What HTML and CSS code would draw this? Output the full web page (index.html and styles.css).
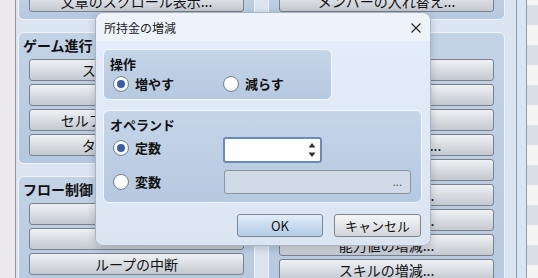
FILE: index.html
```html
<!DOCTYPE html>
<html lang="ja">
<head>
    <meta charset="UTF-8">
    <title>所持金の増減</title>
    <link rel="stylesheet" href="styles.css">
</head>
<body>

    <div class="editor">
        <div class="side"></div>

        <div class="pane">
            <div class="column">
                <div class="group cut">
                    <div class="cmd">文章のスクロール表示...</div>
                </div>
                <div class="group">
                    <div class="group-title">ゲーム進行</div>
                    <div class="cmd">スイッチの操作...</div>
                    <div class="cmd">変数の操作...</div>
                    <div class="cmd">セルフスイッチの操作...</div>
                    <div class="cmd">タイマーの操作...</div>
                </div>
                <div class="group">
                    <div class="group-title">フロー制御</div>
                    <div class="cmd">条件分岐...</div>
                    <div class="cmd">ループ...</div>
                    <div class="cmd">ループの中断</div>
                    <div class="cmd">イベント処理の中断</div>
                </div>
            </div>

            <div class="column">
                <div class="group cut">
                    <div class="cmd">メンバーの入れ替え...</div>
                </div>
                <div class="group">
                    <div class="group-title">アクター</div>
                    <div class="cmd">HPの増減...</div>
                    <div class="cmd">MPの増減...</div>
                    <div class="cmd">TPの増減...</div>
                    <div class="cmd">ステートの変更...</div>
                    <div class="cmd">全回復...</div>
                    <div class="cmd">経験値の増減...</div>
                    <div class="cmd">レベルの増減...</div>
                    <div class="cmd">能力値の増減...</div>
                    <div class="cmd">スキルの増減...</div>
                    <div class="cmd">装備の変更...</div>
                </div>
            </div>
        </div>

        <div class="rail"></div>
        <div class="list"></div>
    </div>

    <div class="dialog">
        <div class="titlebar">
            <span class="dialog-title">所持金の増減</span>
            <svg class="close" width="10" height="10" viewBox="0 0 10 10">
                <path d="M0.5 0.5 L9.5 9.5 M9.5 0.5 L0.5 9.5" stroke="#222" stroke-width="1.1" fill="none"/>
            </svg>
        </div>

        <div class="dialog-body">
            <div class="box box-op">
                <div class="box-title">操作</div>
                <div class="radio-row">
                    <div class="radio-item"><span class="radio on"></span>増やす</div>
                    <div class="radio-item"><span class="radio"></span>減らす</div>
                </div>
            </div>

            <div class="box box-operand">
                <div class="box-title">オペランド</div>
                <div class="operand-grid">
                    <div class="radio-item first"><span class="radio on"></span>定数</div>
                    <div class="spin">
                        <svg width="8" height="16" viewBox="0 0 8 16">
                            <path d="M4 1 L7.5 5.5 L0.5 5.5 Z M0.5 10.5 L7.5 10.5 L4 15 Z" fill="#333"/>
                        </svg>
                    </div>
                    <div class="radio-item"><span class="radio"></span>変数</div>
                    <div class="picker">...</div>
                </div>
            </div>

            <div class="footer">
                <button type="button" class="btn btn-ok">OK</button>
                <button type="button" class="btn">キャンセル</button>
            </div>
        </div>
    </div>

</body>
</html>
```

FILE: styles.css
```css
body {
    margin: 0;
    padding: 0;
    width: 538px;
    height: 278px;
    overflow: hidden;
    position: relative;
    font-family: "Noto Sans CJK JP", "Noto Sans", sans-serif;
    color: #111;
}

.editor {
    display: flex;
    height: 278px;
}

.side {
    width: 15px;
    background-color: #ebe8ee;
    border-right: 1px solid #8e98a3;
}

.pane {
    display: grid;
    grid-template-columns: 237px 237px;
    column-gap: 13px;
    align-items: start;
    padding: 0 11px 0 2px;
    background-color: #dae5f1;
}

.column {
    display: flex;
    flex-direction: column;
    gap: 12px;
}

.group {
    display: flex;
    flex-direction: column;
    gap: 3px;
    padding: 5px 10px 7px;
    border: 1px solid #eef3f9;
    border-radius: 6px;
    background: linear-gradient(#c3d3e6, #b4c8df);
}

.group.cut {
    margin-top: -11px;
    padding-top: 0;
}

.group-title {
    height: 18px;
    line-height: 14px;
    margin-left: -6px;
    font-size: 14px;
    font-weight: bold;
}

.cmd {
    height: 22px;
    box-sizing: border-box;
    border: 1px solid #7b818a;
    border-radius: 3px;
    background: linear-gradient(#eff1f4, #c3c9d0);
    font-size: 14px;
    line-height: 20px;
    text-align: center;
    white-space: nowrap;
    overflow: hidden;
}

.rail {
    width: 9px;
    background-color: #d9e5f2;
    border-left: 1px solid #8f9aa6;
    border-right: 1px solid #8f9aa6;
}

.list {
    flex: 1;
    background: repeating-linear-gradient(#f4f4f5 0, #f4f4f5 5px, #dadfe5 5px, #dadfe5 25px, #f4f4f5 25px, #f4f4f5 40px);
}

/* dialog window over the editor */
.dialog {
    position: absolute;
    left: 95px;
    top: 12px;
    width: 336px;
    height: 234px;
    box-sizing: border-box;
    border: 1px solid #aab5c3;
    border-radius: 8px;
    overflow: hidden;
    box-shadow: 0 2px 8px rgba(0, 0, 0, 0.18);
    display: flex;
    flex-direction: column;
}

.titlebar {
    height: 28px;
    flex-shrink: 0;
    display: flex;
    align-items: center;
    justify-content: space-between;
    padding: 0 9px 0 8px;
    background-color: #eef3fa;
}

.dialog-title {
    font-size: 12px;
    color: #1b1b1b;
}

.close {
    margin-top: 2px;
}

.dialog-body {
    flex: 1;
    padding: 8px 8px 0 7px;
    background: linear-gradient(#e3edf9, #dae5f1);
}

.box {
    box-sizing: border-box;
    border: 1px solid #f3f7fb;
    border-radius: 6px;
    background: linear-gradient(#c6d5e8, #b5c9e0);
    padding: 6px 8px 7px 6px;
}

.box-op {
    width: 229px;
    height: 51px;
}

.box-operand {
    width: 319px;
    height: 93px;
    margin-top: 10px;
}

.box-title {
    font-size: 13px;
    font-weight: bold;
    line-height: 16px;
}

.radio-row {
    display: grid;
    grid-template-columns: 110px auto;
    margin: 4px 0 0 3px;
}

.radio-item {
    display: flex;
    align-items: center;
    gap: 6px;
    height: 16px;
    font-size: 13px;
    font-weight: 600;
    line-height: 16px;
}

.radio {
    width: 16px;
    height: 16px;
    box-sizing: border-box;
    border-radius: 50%;
    border: 1px solid #77818c;
    background: radial-gradient(circle at 50% 35%, #ffffff 45%, #dde3ea 100%);
    position: relative;
    flex-shrink: 0;
}

.radio.on::after {
    content: "";
    position: absolute;
    left: 3px;
    top: 3px;
    width: 8px;
    height: 8px;
    border-radius: 50%;
    background-color: #3c5ea8;
}

.operand-grid {
    display: grid;
    grid-template-columns: 110px 188px;
    grid-template-rows: 26px 24px;
    row-gap: 7px;
    align-items: center;
    margin: 4px 0 0 3px;
}

.radio-item.first {
    align-self: start;
    margin-top: 3px;
}

.spin {
    width: 99px;
    height: 26px;
    box-sizing: border-box;
    border: 2px solid #6a8bb6;
    border-radius: 3px;
    background-color: #fff;
    display: flex;
    justify-content: flex-end;
    align-items: center;
    padding-right: 4px;
}

.picker {
    height: 24px;
    box-sizing: border-box;
    margin-left: 1px;
    border: 1px solid #8d949c;
    border-radius: 3px;
    background-color: #d0dbe7;
    font-size: 11px;
    color: #555;
    line-height: 20px;
    text-align: right;
    padding-right: 8px;
}

.footer {
    display: flex;
    justify-content: flex-end;
    gap: 11px;
    margin-top: 11px;
    padding-right: 1px;
}

.btn {
    width: 87px;
    height: 23px;
    border: 1px solid #7e8791;
    border-radius: 3px;
    background: linear-gradient(#f6f6f7, #d2d5d9);
    font-family: "Noto Sans CJK JP", "Noto Sans", sans-serif;
    font-size: 13px;
    line-height: 19px;
    color: #111;
    padding: 0;
}

.btn-ok {
    width: 86px;
    background: linear-gradient(#e2edf9, #b2cbe8);
}
```
